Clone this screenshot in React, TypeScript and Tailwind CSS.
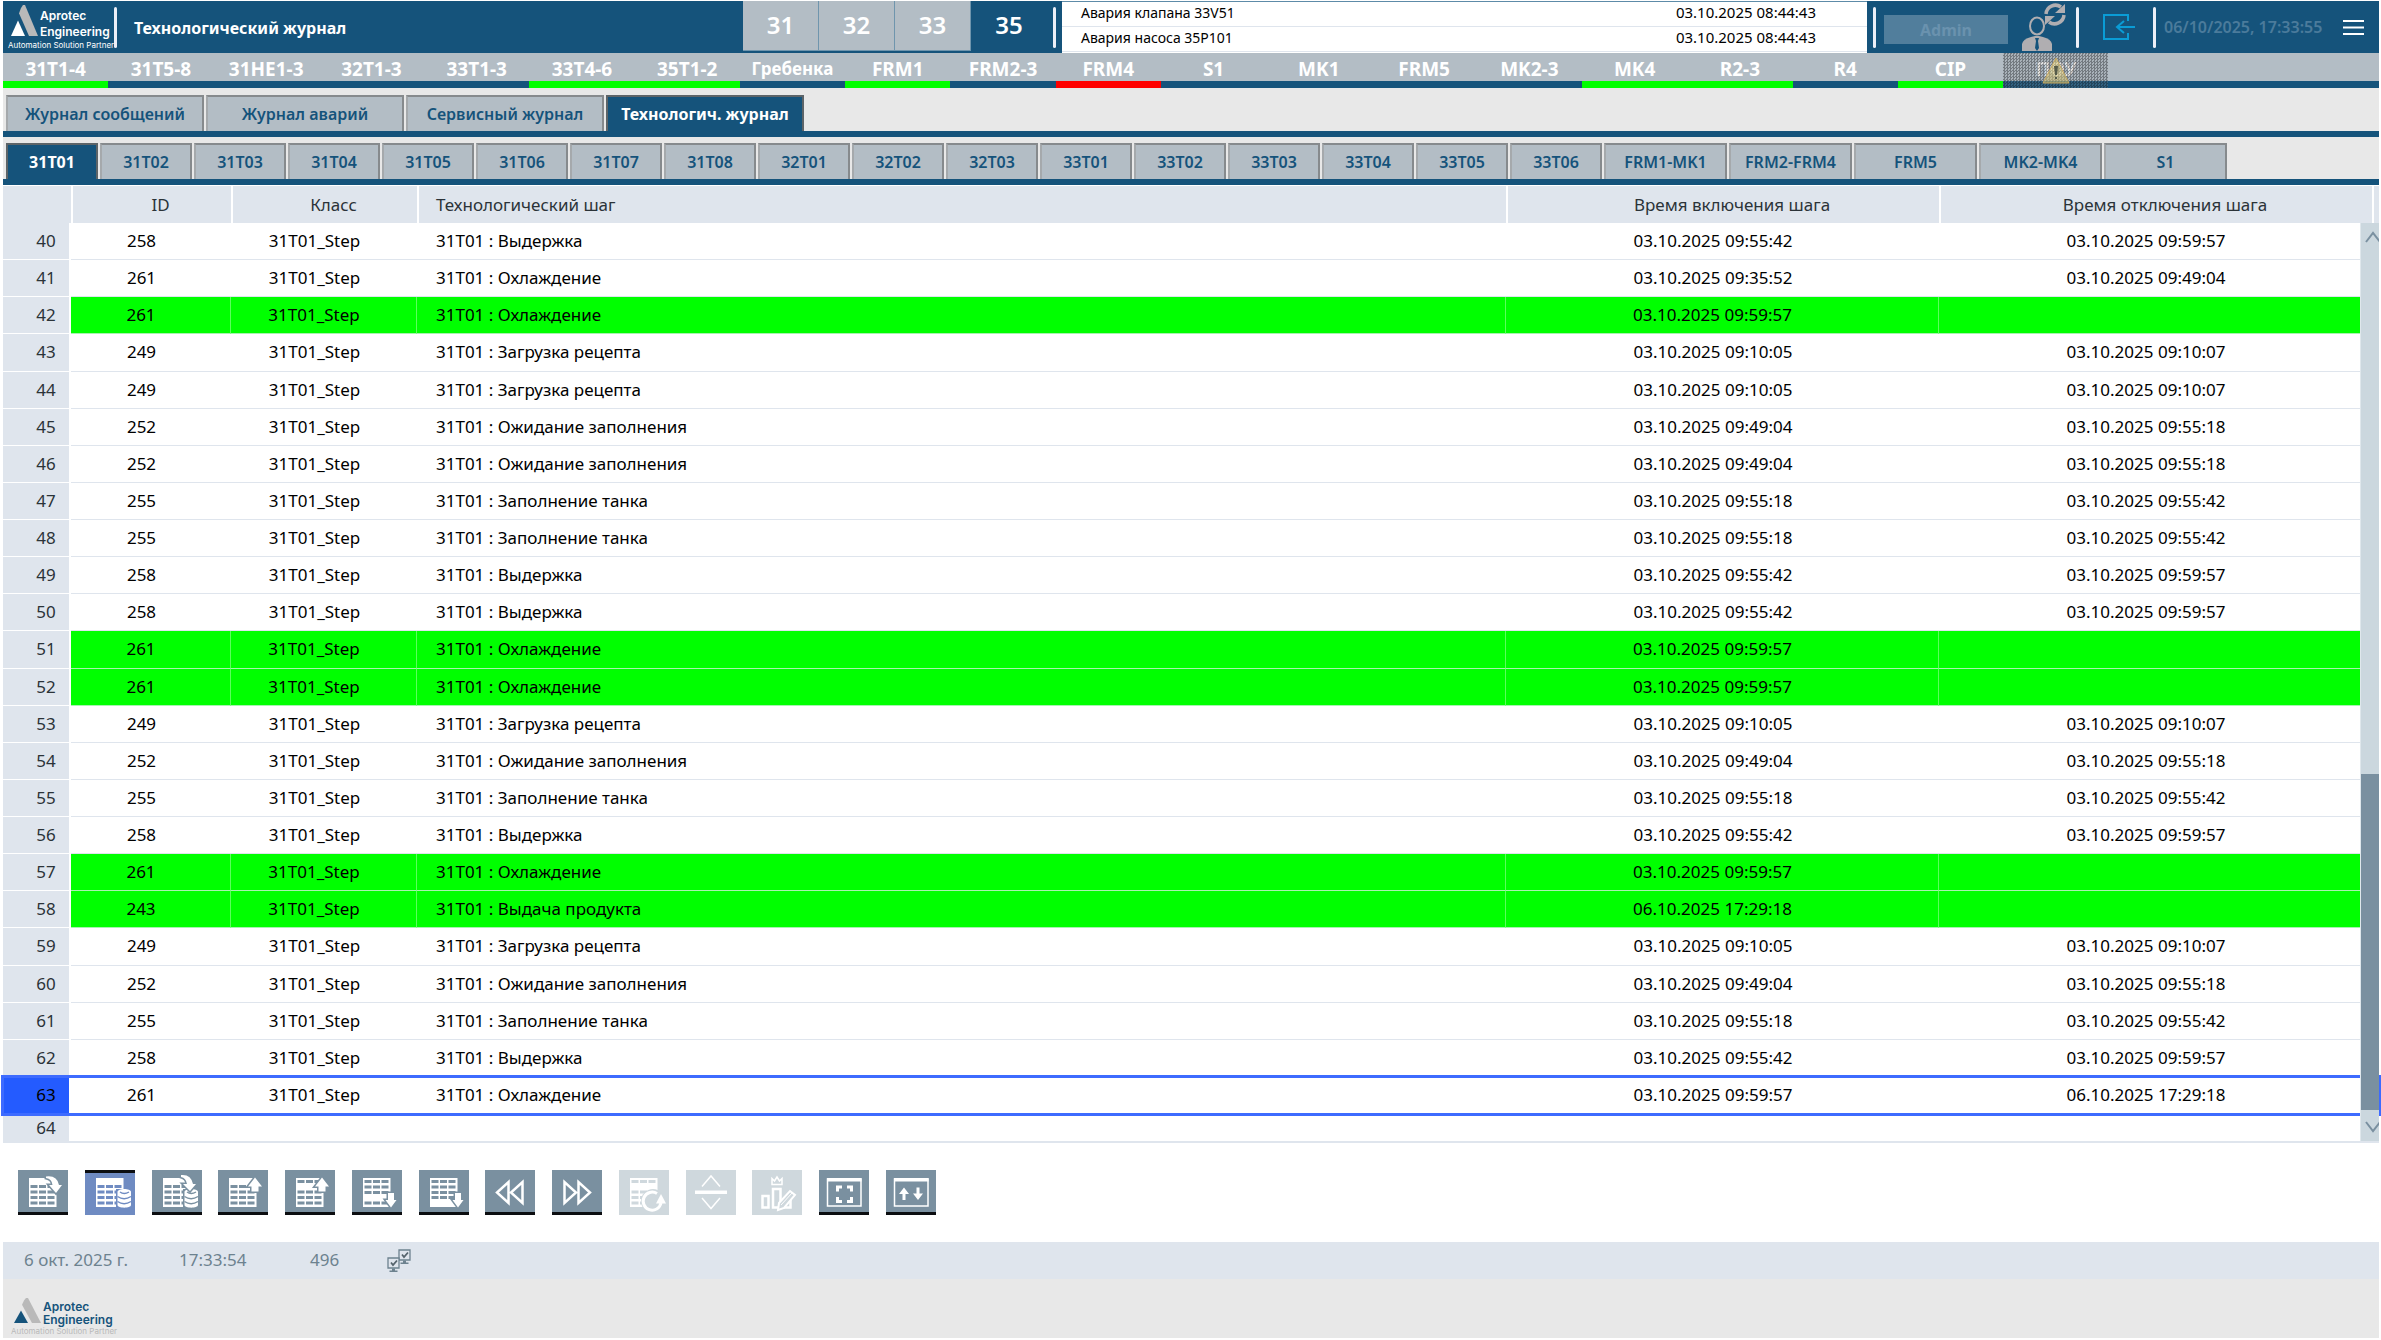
import clsx from "clsx";
import type { ReactNode } from "react";

type Status = "ok" | "alarm";

const areas: { name: string; status?: Status; noData?: boolean }[] = [
  { name: "31T1-4", status: "ok" },
  { name: "31T5-8" },
  { name: "31HE1-3" },
  { name: "32T1-3" },
  { name: "33T1-3" },
  { name: "33T4-6", status: "ok" },
  { name: "35T1-2", status: "ok" },
  { name: "Гребенка" },
  { name: "FRM1", status: "ok" },
  { name: "FRM2-3" },
  { name: "FRM4", status: "alarm" },
  { name: "S1" },
  { name: "MK1" },
  { name: "FRM5" },
  { name: "MK2-3" },
  { name: "MK4", status: "ok" },
  { name: "R2-3", status: "ok" },
  { name: "R4" },
  { name: "CIP", status: "ok" },
  { name: "ПОУ", noData: true },
];

const sections = ["31", "32", "33", "35"];

const alarms = [
  { text: "Авария клапана 33V51", time: "03.10.2025 08:44:43" },
  { text: "Авария насоса 35P101", time: "03.10.2025 08:44:43" },
];

const journals = ["Журнал сообщений", "Журнал аварий", "Сервисный журнал", "Технологич. журнал"];

const tanks = [
  "31T01", "31T02", "31T03", "31T04", "31T05", "31T06", "31T07", "31T08",
  "32T01", "32T02", "32T03",
  "33T01", "33T02", "33T03", "33T04", "33T05", "33T06",
];
const lines = ["FRM1-MK1", "FRM2-FRM4", "FRM5", "MK2-MK4", "S1"];

const steps: Record<number, { name: string; on: string; off: string }> = {
  243: { name: "Выдача продукта", on: "06.10.2025 17:29:18", off: "" },
  249: { name: "Загрузка рецепта", on: "03.10.2025 09:10:05", off: "03.10.2025 09:10:07" },
  252: { name: "Ожидание заполнения", on: "03.10.2025 09:49:04", off: "03.10.2025 09:55:18" },
  255: { name: "Заполнение танка", on: "03.10.2025 09:55:18", off: "03.10.2025 09:55:42" },
  258: { name: "Выдержка", on: "03.10.2025 09:55:42", off: "03.10.2025 09:59:57" },
  261: { name: "Охлаждение", on: "03.10.2025 09:59:57", off: "" },
};

type Row = { no: number; id: number; on?: string; off?: string };

const rows: Row[] = [
  { no: 40, id: 258 },
  { no: 41, id: 261, on: "03.10.2025 09:35:52", off: "03.10.2025 09:49:04" },
  { no: 42, id: 261 },
  { no: 43, id: 249 },
  { no: 44, id: 249 },
  { no: 45, id: 252 },
  { no: 46, id: 252 },
  { no: 47, id: 255 },
  { no: 48, id: 255 },
  { no: 49, id: 258 },
  { no: 50, id: 258 },
  { no: 51, id: 261 },
  { no: 52, id: 261 },
  { no: 53, id: 249 },
  { no: 54, id: 252 },
  { no: 55, id: 255 },
  { no: 56, id: 258 },
  { no: 57, id: 261 },
  { no: 58, id: 243 },
  { no: 59, id: 249 },
  { no: 60, id: 252 },
  { no: 61, id: 255 },
  { no: 62, id: 258 },
  { no: 63, id: 261, off: "06.10.2025 17:29:18" },
];
const selectedRow = 63;

function Logo({ dark }: { dark?: boolean }) {
  return (
    <div className={clsx("w-[102px] shrink-0 font-[Inter,sans-serif]", dark ? "text-[#15537b]" : "text-white")}>
      <div className="flex items-start gap-[2px] pl-[3px]">
        <svg
          className={clsx("w-[27px] shrink-0", dark ? "h-[25px]" : "h-[31px]")}
          viewBox="0 0 27 30"
          preserveAspectRatio="none"
          aria-hidden="true"
        >
          <path d="M10 3 L12 0 H14 L27 30 H18 L8 8 Z" fill="#b9b9b9" />
          <path d="M7 15 L14 30 H0 Z" fill="currentColor" />
        </svg>
        <div className={clsx("text-[12px] font-semibold", dark ? "pt-[2px] leading-[13px]" : "pt-[3px] leading-[16px]")}>
          Aprotec
          <br />
          Engineering
        </div>
      </div>
      <div className={clsx("text-[8px] leading-[10px] whitespace-nowrap", dark ? "text-[#b9b9b9]" : "text-white")}>
        Automation Solution Partner
      </div>
    </div>
  );
}

function Divider() {
  return <span className="h-[41px] w-[3px] shrink-0 rounded-full bg-[#eceff8]" />;
}

function UserSwitchIcon() {
  return (
    <svg width="46" height="50" viewBox="0 0 46 50" fill="none" aria-hidden="true">
      <ellipse cx="16" cy="24" rx="7" ry="8.5" stroke="#b0aeb1" strokeWidth="2" />
      <path d="M1 49 V42 Q2 37 10 35 L14 34 H18 L22 35 Q30 37 31 42 V49 Z" fill="#b0aeb1" />
      <path d="M14 36 H18 L17 39 L18 46 L16 49 L14 46 L15 39 Z" fill="#15537b" />
      <path d="M25 12 A9.5 9.5 0 0 1 40 5" stroke="#b0aeb1" strokeWidth="3.5" />
      <path d="M44 2 V11 H34 Z" fill="#b0aeb1" />
      <path d="M43 13 A9.5 9.5 0 0 1 28 20" stroke="#b0aeb1" strokeWidth="3.5" />
      <path d="M24 23 V14 H34 Z" fill="#b0aeb1" />
    </svg>
  );
}

function Header() {
  return (
    <header className="flex h-[52px] bg-[#15537b]">
      <div className="flex flex-1 items-center pl-[5px]">
        <Logo />
        <span className="w-1" />
        <Divider />
        <h1 className="ml-[17px] pt-[2px] text-[16px] font-bold text-white">Технологический журнал</h1>
      </div>

      <nav className="flex" aria-label="Секции">
        {sections.map((s) => (
          <button
            key={s}
            type="button"
            className={clsx(
              "mb-[2px] w-[76px] pb-[2px] text-2xl font-semibold text-white",
              s === "35" ? "bg-[#15537b]" : "border-r border-b border-r-[#6f95ad] border-b-[#6f95ad] bg-[#b3bdc5]",
            )}
          >
            {s}
          </button>
        ))}
      </nav>

      <div className="flex items-center px-[6px]">
        <Divider />
      </div>

      <ul className="w-[805px] border-t border-[#5d8ba8] bg-white text-black">
        {alarms.map((a) => (
          <li key={a.text} className="flex h-[25px] items-center justify-between border-b border-[#dfe5ed] pr-[51px] pb-[3px] pl-[19px]">
            <span className="text-[14px]">{a.text}</span>
            <time className="text-[15px]">{a.time}</time>
          </li>
        ))}
      </ul>

      <div className="flex items-center pl-[6px]">
        <Divider />
        <button type="button" className="mt-1 ml-2 h-[29px] w-[124px] bg-[#517e9c] pt-[2px] font-bold text-[#6a92ae]">
          Admin
        </button>
        <button type="button" aria-label="Сменить пользователя" className="ml-[13px]">
          <UserSwitchIcon />
        </button>
        <span className="w-[9px]" />
        <Divider />
        <button type="button" aria-label="Выход" className="ml-[24px]">
          <svg width="32" height="26" viewBox="0 0 32 26" fill="none" stroke="#0a9cd6" strokeWidth="2" aria-hidden="true">
            <path d="M25 7 V1 H1 V25 H25 V19" />
            <path d="M32 13 H14 M21 7 L14 13 L21 19" />
          </svg>
        </button>
        <span className="w-[18px]" />
        <Divider />
        <time className="ml-[8px] w-[179px] text-[16px] font-semibold text-[#4b7b9b]">06/10/2025, 17:33:55</time>
        <button type="button" aria-label="Меню" className="mr-[15px]">
          <svg width="21" height="15" viewBox="0 0 21 15" fill="#fff" aria-hidden="true">
            <path d="M0 0 H21 V2 H0 Z M0 6.5 H21 V8.5 H0 Z M0 13 H21 V15 H0 Z" />
          </svg>
        </button>
      </div>
    </header>
  );
}

function AreaBar() {
  return (
    <nav className="flex h-[35px]" aria-label="Участки">
      {areas.map((a) => (
        <a
          key={a.name}
          href="#"
          className={clsx(
            "relative flex flex-[7_7_0px] items-center justify-center border-b-[7px] bg-[#b3bdc5] pt-[4px] font-bold text-white",
            a.name === "Гребенка" ? "text-[17px]" : "text-[19px]",
            a.status === "ok" && "border-[#00ff00]",
            a.status === "alarm" && "border-[#ff0000]",
            !a.status && "border-[#15537b]",
          )}
        >
          {a.name}
          {a.noData && (
            <span className="absolute inset-x-0 top-0 -bottom-[7px] flex items-center justify-center bg-[repeating-conic-gradient(#33373b80_0_25%,#8a8f9440_0_50%)] bg-[length:3px_3px]">
              <svg className="shrink-0" width="28" height="27" viewBox="0 0 28 27" aria-hidden="true">
                <path d="M14 1 L27 26 H1 Z" fill="#d9c872" fillOpacity="0.5" stroke="#c9ab62" strokeWidth="1" />
                <path d="M12 9 H16 L15 18 H13 Z M13 20 H15 V22 H13 Z" fill="#555b4a" />
              </svg>
            </span>
          )}
        </a>
      ))}
      {/* свободные ячейки под будущие участки, последняя неполная */}
      <span className="flex-[7_7_0px] border-b-[7px] border-[#15537b] bg-[#b3bdc5]" />
      <span className="flex-[7_7_0px] border-b-[7px] border-[#15537b] bg-[#b3bdc5]" />
      <span className="flex-[4_4_0px] border-b-[7px] border-[#15537b] bg-[#b3bdc5]" />
    </nav>
  );
}

function Tab({ active, className, children }: { active?: boolean; className: string; children: ReactNode }) {
  return (
    <button
      type="button"
      role="tab"
      aria-selected={!!active}
      className={clsx(
        "h-9 border-2 border-b-0 text-[16px]",
        active
          ? "border-[#5d6468] bg-[#15537b] font-bold text-white"
          : "border-t-[#868a8d] border-r-[#868a8d] border-l-[#a5a9ac] bg-[#b3bdc5] font-semibold text-[#15537b]",
        className,
      )}
    >
      {children}
    </button>
  );
}

function JournalTable() {
  const head = "border-l-2 border-white bg-[#dfe5ed] pl-[17px] font-normal";
  return (
    <div className="relative border-b-2 border-[#dfe5ed] bg-white pt-px">
      <table className="h-[955px] w-full table-fixed border-separate border-spacing-0 text-[17px] leading-6 text-black">
        <colgroup>
          <col className="w-[68px]" />
          <col className="w-[160px]" />
          <col className="w-[186px]" />
          <col />
          <col className="w-[433px]" />
          <col className="w-[433px]" />
          <col className="w-[7px]" />
        </colgroup>
        <thead className="text-[#2b3338]">
          <tr className="h-[37px]">
            <th className="bg-[#dfe5ed]" />
            <th className={head}>ID</th>
            <th className={head}>Класс</th>
            <th className={clsx(head, "text-left")}>Технологический шаг</th>
            <th className={head}>Время включения шага</th>
            <th className={head}>Время отключения шага</th>
            <th className="border-l-2 border-white bg-[#dfe5ed]" />
          </tr>
        </thead>
        <tbody>
          {rows.map((r) => {
            const step = steps[r.id];
            const off = r.off ?? step.off;
            const selected = r.no === selectedRow;
            const cell = clsx(
              "border-b",
              off ? "border-[#dfe5ed]" : "border-r border-r-[#5cff5c] border-b-[#a8f3b0] bg-[#00ff00]",
            );
            return (
              <tr key={r.no} className={clsx(selected && "outline-[3px] -outline-offset-1 outline-[#3d6bff]")}>
                <td
                  className={clsx(
                    "border-r-2 border-b border-white pl-[20px] text-center",
                    selected ? "bg-[#245bff]" : "bg-[#dfe5ed] text-[#2b3338]",
                  )}
                >
                  {r.no}
                </td>
                <td className={clsx(cell, "pr-[19px] text-center")}>{r.id}</td>
                <td className={clsx(cell, "pr-[19px] text-center")}>31T01_Step</td>
                <td className={clsx(cell, "pl-[19px]")}>31T01 : {step.name}</td>
                <td className={clsx(cell, "pr-[19px] text-center")}>{r.on ?? step.on}</td>
                <td className={clsx(cell, "pr-[19px] text-center")}>{off}</td>
                <td className={cell} />
              </tr>
            );
          })}
          {/* последняя строка видна не полностью, поэтому ниже остальных */}
          <tr>
            <td className="border-r-2 border-white bg-[#dfe5ed] pl-[20px] text-center leading-[18px] text-[#2b3338]">64</td>
            <td colSpan={6} />
          </tr>
        </tbody>
      </table>

      {/* полоса прокрутки поверх правого края строк */}
      <div className="absolute top-[38px] right-0 bottom-0 w-[19px] overflow-hidden border-l border-[#dfe7ec] bg-[#cbd7de]">
        <svg className="absolute top-2 left-1" width="16" height="12" viewBox="0 0 16 12" fill="none" stroke="#7a90a0" strokeWidth="2" aria-hidden="true">
          <path d="M1 11 L8 2 L15 11" />
        </svg>
        <div className="absolute inset-x-0 top-[60%] bottom-[31px] bg-[#7a90a0]" />
        <svg className="absolute bottom-2 left-1" width="16" height="12" viewBox="0 0 16 12" fill="none" stroke="#7a90a0" strokeWidth="2" aria-hidden="true">
          <path d="M1 1 L8 10 L15 1" />
        </svg>
      </div>
    </div>
  );
}

/* Белый лист таблицы; holes - верхние координаты строк с ячейками */
function Sheet({ holes }: { holes: number[] }) {
  return (
    <>
      <rect x="11" y="8" width="27.5" height="29" fill="#fff" />
      {holes.map((y) => (
        <path key={y} className="fill-(--btn)" d={`M12.5 ${y}h7v3h-7z M21 ${y}h7v3h-7z M29.5 ${y}h7v3h-7z`} />
      ))}
    </>
  );
}

function Database() {
  return (
    <g>
      <path className="fill-(--btn)" d="M31 19 H48 V39 H31 Z" />
      <path d="M32.5 22 C32.5 18 46 18 46 22 V35 C46 38.5 32.5 38.5 32.5 35 Z" fill="#fff" />
      <path
        className="stroke-(--btn)"
        d="M35 22 Q39 25 44 22 M32.5 26.5 Q39 31 46 26.5 M32.5 31.5 Q39 36 46 31.5"
        fill="none"
        strokeWidth="1.4"
      />
    </g>
  );
}

/* Стрелки обводятся цветом кнопки под заливкой, чтобы отделить их от листа */
function Arrow({ d }: { d: string }) {
  return <path className="stroke-(--btn) [paint-order:stroke]" d={d} fill="#fff" strokeWidth="3" />;
}

const arrowUp = "M37 7.5 L44 16.5 H40.5 V21.5 H33.5 V16.5 H30 Z";
const arrowDown = "M39 37.5 L44.5 30 H42 V23 H36 V30 H33.5 Z";

function Window() {
  return (
    <>
      <path d="M8.5 9 H42 V36 H8.5 Z" fill="none" stroke="#fff" strokeWidth="1.5" />
      <path d="M8 8 H42.5 V11.5 H8 Z" fill="#fff" />
    </>
  );
}

const tools: { label: string; state?: "active" | "disabled"; icon: ReactNode }[] = [
  {
    label: "Текущий журнал",
    icon: (
      <>
        <Sheet holes={[15, 20.5, 26, 31.5]} />
        <Arrow d="M28 6.5 Q39 5 41 15 H44 L38 23 L31 15 H34.5 Q34 9 28 8 Z" />
      </>
    ),
  },
  {
    label: "Архив",
    state: "active",
    icon: (
      <>
        <Sheet holes={[15, 20.5, 26, 31.5]} />
        <Database />
      </>
    ),
  },
  {
    label: "Краткосрочный архив",
    icon: (
      <>
        <Sheet holes={[15, 20.5, 26, 31.5]} />
        <Database />
        <Arrow d="M29 5 Q39 4 41 14 H44 L38 21 L31 14 H35 Q34 8 29 7 Z" />
      </>
    ),
  },
  {
    label: "Первая строка",
    icon: (
      <>
        <Sheet holes={[15, 20.5, 26, 31.5]} />
        <Arrow d={arrowUp} />
      </>
    ),
  },
  {
    label: "Предыдущая строка",
    icon: (
      <>
        <Sheet holes={[10, 20.5, 26, 31.5]} />
        <Arrow d={arrowUp} />
      </>
    ),
  },
  {
    label: "Следующая строка",
    icon: (
      <>
        <Sheet holes={[10, 15.5, 21, 31.5]} />
        <Arrow d={arrowDown} />
      </>
    ),
  },
  {
    label: "Последняя строка",
    icon: (
      <>
        <Sheet holes={[10, 15.5, 21, 26]} />
        <Arrow d={arrowDown} />
      </>
    ),
  },
  {
    label: "Предыдущая страница",
    icon: <path d="M23.5 12 V33 L12 22.5 Z M37.5 12 V33 L26 22.5 Z" fill="none" stroke="#fff" strokeWidth="2.5" />,
  },
  {
    label: "Следующая страница",
    icon: <path d="M12.5 12 V33 L24 22.5 Z M26.5 12 V33 L38 22.5 Z" fill="none" stroke="#fff" strokeWidth="2.5" />,
  },
  {
    label: "Обновить",
    state: "disabled",
    icon: (
      <>
        <Sheet holes={[10, 20.5, 26, 31.5]} />
        <circle className="fill-(--btn)" cx="34" cy="31" r="12" />
        <path d="M38 23.5 A9 9 0 1 0 42 33" fill="none" stroke="#fff" strokeWidth="3" />
        <path d="M42 24 L47 33.5 H37 Z" fill="#fff" />
      </>
    ),
  },
  {
    label: "Разделить",
    state: "disabled",
    icon: (
      <>
        <path d="M16 16.5 L25 6 L34 16.5 M16 28 L25 38.5 L34 28" fill="none" stroke="#fff" strokeWidth="1.5" />
        <path d="M9 20.5 H41 V24 H9 Z" fill="#fff" />
      </>
    ),
  },
  {
    label: "Статистика",
    state: "disabled",
    icon: (
      <>
        <path
          d="M10.5 26 H16.5 V37.5 H10.5 Z M21 19 H28.5 V37.5 H21 Z M28.5 32 L38.5 29 V37.5 H28.5 Z"
          fill="none"
          stroke="#fff"
          strokeWidth="2.5"
        />
        <path d="M20 14.5 V8.5 L22.5 11 L25 7 L27.5 11 L30 8.5 V14.5 Z" fill="none" stroke="#fff" strokeWidth="1.5" />
        <path className="fill-(--btn)" d="M27 33 L38 21 L43 25 L32 38 L26 40 Z" stroke="#fff" strokeWidth="2" />
        <path d="M29 35 L40 23" stroke="#fff" strokeWidth="1" />
      </>
    ),
  },
  {
    label: "Во весь экран",
    icon: (
      <>
        <Window />
        <path
          d="M23 17 H18.5 V21.5 M28 17 H32.5 V21.5 M23 31.5 H18.5 V27 M28 31.5 H32.5 V27"
          fill="none"
          stroke="#fff"
          strokeWidth="3"
        />
      </>
    ),
  },
  {
    label: "Прокрутка",
    icon: (
      <>
        <Window />
        <path
          d="M18 17.5 L23 24 H19.5 V30 H16.5 V24 H13 Z M32 30 L27 23.5 H30.5 V17.5 H33.5 V23.5 H37 Z"
          fill="#fff"
        />
      </>
    ),
  },
];

function Toolbar() {
  return (
    <div className="bg-white px-[15px] py-[27px]">
      <div className="flex max-w-[918px] justify-between" role="toolbar" aria-label="Журнал">
        {tools.map((t) => (
          <button
            key={t.label}
            type="button"
            aria-label={t.label}
            disabled={t.state === "disabled"}
            className={clsx(
              "relative h-[45px] w-[50px] bg-(--btn)",
              !t.state && "border-b-[3px] border-[#0b0d10] [--btn:#7a90a0]",
              t.state === "active" && "border-t-[3px] border-[#0b0d10] [--btn:#6f8bc2]",
              t.state === "disabled" && "[--btn:#cfd8dd]",
            )}
          >
            <svg
              className={clsx("absolute left-0", t.state === "active" ? "-top-[3px]" : "top-0")}
              width="50"
              height="45"
              viewBox="0 0 50 45"
              aria-hidden="true"
            >
              {t.icon}
            </svg>
          </button>
        ))}
      </div>
    </div>
  );
}

function Monitor() {
  return (
    <>
      <path d="M1 1 H12 V11 H1 Z" fill="#dfe5ed" stroke="#6d828f" strokeWidth="1.3" />
      <path d="M5 11.5 H8 V13.5 H10.5 V15 H2.5 V13.5 H5 Z" fill="#6d828f" />
      <path d="M4 5.5 L6 8 L10 3.5" fill="none" stroke="#56646d" strokeWidth="1.8" />
    </>
  );
}

function StatusBar() {
  return (
    <div className="flex h-[37px] items-center bg-[#dfe5ed] pb-[2px] pl-[21px] text-[17px] text-[#6d828f]">
      <span className="w-[155px]">6 окт. 2025 г.</span>
      <span className="w-[131px]">17:33:54</span>
      <span className="w-[77px]">496</span>
      <svg className="mt-[2px]" width="25" height="24" viewBox="0 0 25 24" aria-hidden="true">
        <g transform="translate(11 0)">
          <Monitor />
        </g>
        <g transform="translate(0 8)">
          <Monitor />
        </g>
      </svg>
    </div>
  );
}

export default function App() {
  return (
    <div className="bg-white pt-px pr-[2px] pb-[2px] pl-[3px] font-['Noto_Sans','Open_Sans',sans-serif]">
      <Header />
      <AreaBar />

      <main className="bg-[#e8e8e8] pt-[7px]">
        <div className="flex gap-[2px] border-b-[6px] border-[#15537b] pl-[3px]" role="tablist">
          {journals.map((j) => (
            <Tab key={j} active={j === "Технологич. журнал"} className="w-[198px]">
              {j}
            </Tab>
          ))}
        </div>

        <div className="mt-[6px] flex gap-[2px] border-b-[6px] border-[#15537b] pl-[3px]" role="tablist">
          {tanks.map((t) => (
            <Tab key={t} active={t === "31T01"} className="w-[92px]">
              {t}
            </Tab>
          ))}
          {lines.map((l) => (
            <Tab key={l} className="w-[123px]">
              {l}
            </Tab>
          ))}
        </div>

        <JournalTable />
        <Toolbar />
        <StatusBar />
      </main>

      <footer className="bg-[#e8e8e8] px-2 pt-[19px] pb-[2px]">
        <Logo dark />
      </footer>
    </div>
  );
}
